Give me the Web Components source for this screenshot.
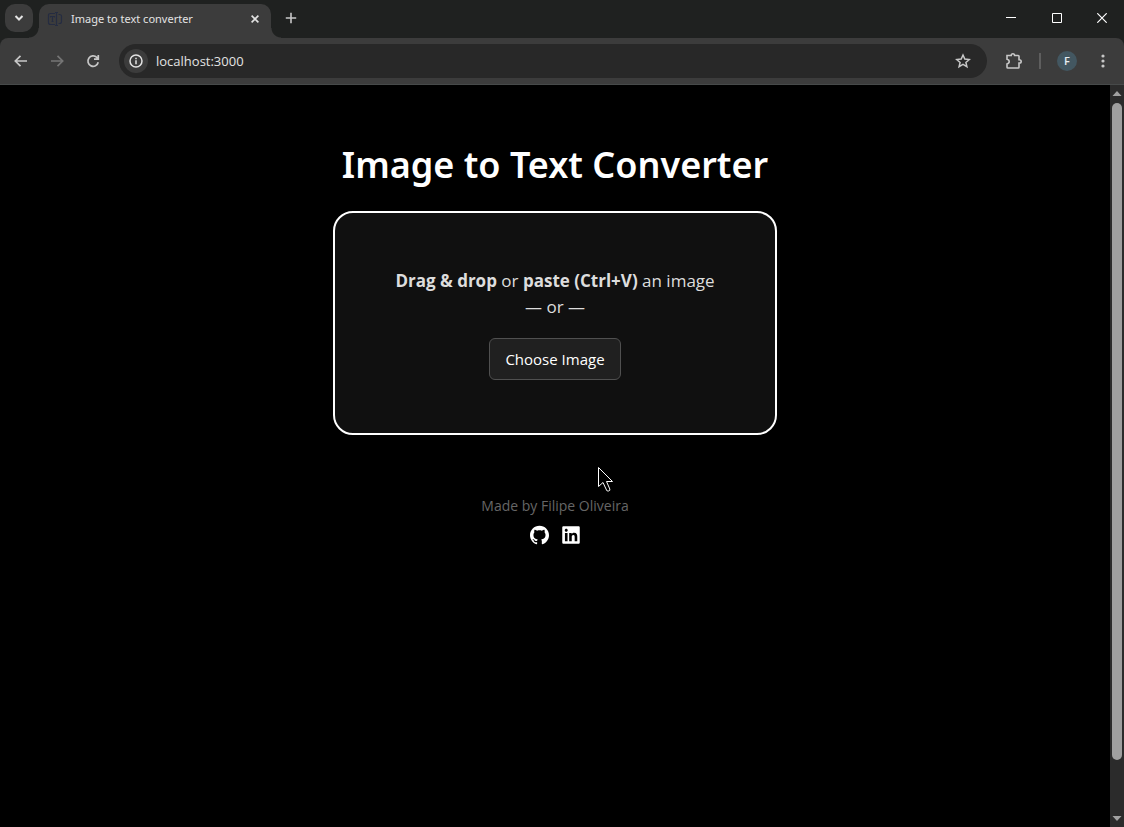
<!DOCTYPE html>
<html lang="en">
<head>
<meta charset="utf-8">
<title>Image to text converter</title>
<style>
html,body{margin:0;height:100%;background:#000}
body{font-family:"Open Sans","Noto Sans",sans-serif;overflow:hidden}
</style>
</head>
<body>
<browser-window>
  <tab-strip slot="tabs"><browser-tab>Image to text converter</browser-tab></tab-strip>
  <browser-toolbar slot="toolbar" url="localhost:3000" initial="F"></browser-toolbar>
  <converter-page>
    <drop-zone></drop-zone>
    <page-credits slot="footer">Made by Filipe Oliveira</page-credits>
  </converter-page>
  <scroll-bar slot="scroll"></scroll-bar>
</browser-window>
<script>
const define = (name, html, setup) => {
  const template = document.createElement('template');
  template.innerHTML = html;
  customElements.define(name, class extends HTMLElement {
    constructor() {
      super();
      this.attachShadow({mode: 'open'}).append(template.content.cloneNode(true));
    }
    connectedCallback() { if (setup) setup(this, this.shadowRoot); }
  });
};
const buttonReset = `button{border:0;padding:0;margin:0;background:none;color:inherit;font:inherit;display:flex;align-items:center;justify-content:center}svg{display:block}`;

define('browser-window', `
<style>
:host{display:flex;flex-direction:column;height:100vh;position:relative}
.view{flex:1;display:flex;min-height:0;border-top:1px solid #474a4a}
.page{flex:1;min-width:0;background:#000}
.cursor{position:absolute;left:597px;top:466px}
</style>
<slot name="tabs"></slot><slot name="toolbar"></slot>
<div class="view"><div class="page"><slot></slot></div><slot name="scroll"></slot></div>
<svg class="cursor" width="18" height="28" viewBox="0 0 18 28" aria-hidden="true"><path d="M1.500 1.500V20.500L6 16.500L9.500 24Q10 25.500 11.500 25Q13.500 24.500 12.800 23L9.500 15.500H15.500Z" fill="#000" stroke="#fff"/></svg>
`);

define('tab-strip', `
<style>
:host{display:flex;height:38px;background:#1f2120;color:#e3e3e3}
${buttonReset}
.search{width:28px;height:28px;margin:4px 6px 0 5px;border-radius:10px;background:#3c3c3c}
.new{width:28px;height:28px;margin:4px 0 0 6px;color:#c7c7c7}
.controls{margin-left:auto;display:flex;color:#fff}
.controls button{width:46px;height:36px}
.controls button:last-child{width:44px}
</style>
<button class="search" aria-label="Search tabs"><svg width="10" height="8" viewBox="0 0 10 8" fill="none" stroke="currentColor" stroke-width="2"><path d="M1.500 2L5 5.500L8.500 2"/></svg></button>
<slot></slot>
<button class="new" aria-label="New tab"><svg width="12" height="12" viewBox="0 0 12 12" stroke="currentColor" stroke-width="1.600"><path d="M6 .8V11.200M.8 6H11.200"/></svg></button>
<div class="controls">
<button aria-label="Minimize"><svg width="10" height="10" stroke="currentColor"><path d="M0 4.500H10"/></svg></button>
<button aria-label="Maximize"><svg width="10" height="10" fill="none" stroke="currentColor"><path d="M.5 .5H9.500V9.500H.5Z"/></svg></button>
<button aria-label="Close"><svg width="10" height="10" stroke="currentColor" stroke-width="1.200"><path d="M.3 .3L9.700 9.700M9.700 .3L.3 9.700"/></svg></button>
</div>
`);

define('browser-tab', `
<style>
:host{display:flex;align-items:center;box-sizing:border-box;position:relative;width:232px;height:34px;margin-top:4px;padding:0 8px 5px;background:#3c3c3c;border-radius:10px 10px 0 0;font-size:11px}
:host::before,:host::after{content:"";position:absolute;bottom:0;width:10px;height:10px}
:host::before{right:100%;background:radial-gradient(circle at 0 0,transparent 9px,#3c3c3c 10px)}
:host::after{left:100%;background:radial-gradient(circle at 100% 0,transparent 9px,#3c3c3c 10px)}
.title{flex:1;margin-left:8px;white-space:nowrap;font-family:"Noto Sans",sans-serif}
${buttonReset}
button{width:16px;height:16px}
</style>
<svg width="16" height="16" viewBox="0 0 16 16" fill="none" stroke="#252c41" stroke-width="1.200"><path d="M8 2.500H3.500Q1.500 2.500 1.500 4.500V11.500Q1.500 13.500 3.500 13.500H8M9.500 1.500V14.500M8 1.500H11M8 14.500H11M11.500 3.500H12.500Q14.500 3.500 14.500 5.500V10.500Q14.500 12.500 12.500 12.500H11.500M3.500 6.500V5.500H7.500V6.500M5.500 5.500V10.500M4.500 10.500H6.500"/></svg>
<span class="title"><slot></slot></span>
<button aria-label="Close tab"><svg width="8" height="8" stroke="currentColor" stroke-width="1.600"><path d="M.6 .6L7.400 7.400M7.400 .6L.6 7.400"/></svg></button>
`);

define('browser-toolbar', `
<style>
:host{display:block;background:#1f2120;color:#c7c7c7}
.bar{display:flex;align-items:center;height:46px;padding:0 7px;background:#3c3c3c;border-radius:8px 8px 0 0}
${buttonReset}
button{width:28px;height:28px;flex:none}
.nav{display:flex;gap:8px}
.forward{color:#757575}
.omnibox{flex:1;min-width:0;display:flex;align-items:center;height:34px;margin:0 13px 0 12px;padding:0 10px 0 5px;box-sizing:border-box;background:#282828;border-radius:17px}
.info{width:24px;height:24px;border-radius:50%;background:#3c3c3c;color:#e3e3e3}
input{flex:1;min-width:0;margin:0 8px;padding:0;border:0;outline:0;background:none;color:#e3e3e3;font:13px "Open Sans",sans-serif}
.divider{width:2px;height:16px;margin:0 12px 0 11px;background:#5e5e5e}
.avatar span{width:20px;height:20px;border-radius:50%;background:#435761;color:#e8eef2;font-size:11px;font-weight:600;line-height:20px}
.menu{margin-left:8px}
</style>
<div class="bar">
<div class="nav">
<button aria-label="Back"><svg width="14" height="12" viewBox="0 0 14 12" fill="none" stroke="currentColor" stroke-width="1.700"><path d="M13 6H1.500M6.500 .8L1.300 6L6.500 11.200"/></svg></button>
<button class="forward" aria-label="Forward"><svg width="14" height="12" viewBox="0 0 14 12" fill="none" stroke="currentColor" stroke-width="1.700"><path d="M1 6H12.500M7.500 .8L12.700 6L7.500 11.200"/></svg></button>
<button aria-label="Reload"><svg width="14" height="14" viewBox="0 0 14 14" fill="none" stroke="currentColor" stroke-width="1.700"><path d="M12.200 8.200A5.200 5.200 0 1 1 10.800 3.400L12.300 4.900M12.300 1V5.200H8"/></svg></button>
</div>
<div class="omnibox">
<button class="info" aria-label="View site information"><svg width="14" height="14" viewBox="0 0 14 14" fill="none" stroke="currentColor" stroke-width="1.500"><circle cx="7" cy="7" r="6"/><path d="M7 6.200V10.200M7 3.800V5.200"/></svg></button>
<input type="text" aria-label="Address" spellcheck="false">
<button aria-label="Bookmark"><svg width="16" height="16" viewBox="0 0 16 16" fill="none" stroke="currentColor" stroke-width="1.500"><path d="M8 2L9.800 6.100L14.200 6.500L10.900 9.400L11.900 13.700L8 11.400L4.100 13.700L5.100 9.400L1.800 6.500L6.200 6.100Z"/></svg></button>
</div>
<button aria-label="Extensions"><svg width="18" height="18" viewBox="0 0 18 18" fill="none" stroke="currentColor" stroke-width="1.600"><path d="M2 3.500H6.200Q6.200 1.800 7.900 1.800T9.600 3.500H13.200Q14 3.500 14 4.300V7.700Q16.200 7.700 16.200 9.400T14 11.100V15.200Q14 16 13.200 16H2.800Q2 16 2 15.200V12Q4.200 11.500 4.200 9.600T2 7.200Z"/></svg></button>
<div class="divider"></div>
<button class="avatar" aria-label="Profile"><span></span></button>
<button class="menu" aria-label="Menu"><svg width="4" height="16" fill="currentColor"><circle cx="2" cy="3" r="1.600"/><circle cx="2" cy="8" r="1.600"/><circle cx="2" cy="13" r="1.600"/></svg></button>
</div>
`, (el, root) => {
  root.querySelector('input').value = el.getAttribute('url');
  root.querySelector('.avatar span').textContent = el.getAttribute('initial');
});

define('converter-page', `
<style>
:host{display:block}
main{display:flex;flex-direction:column;align-items:center;padding:52px 16px 0}
h1{margin:0 0 18px;color:#fff;font-family:"Noto Sans",sans-serif;font-size:36px;font-weight:600;line-height:56px;text-align:center}
</style>
<main><h1>Image to Text Converter</h1><slot></slot><slot name="footer"></slot></main>
`);

define('drop-zone', `
<style>
:host{display:block;box-sizing:border-box;width:444px;max-width:100%;padding:55px 24px 53px;border:2px solid #fff;border-radius:20px;background:#101010;color:#ddd;text-align:center}
p{margin:0 0 18px;font-size:17px;line-height:26px}
strong{font-weight:700}
button{display:block;height:42px;margin:0 auto;padding:0 15px;border:1px solid #505050;border-radius:6px;background:#202020;color:#fff;font:15px "Open Sans",sans-serif}
</style>
<p><strong>Drag &amp; drop</strong> or <strong>paste (Ctrl+V)</strong> an image<br>— or —</p>
<button type="button">Choose Image</button>
`);

define('page-credits', `
<style>
:host{display:block;margin-top:60px;color:#666;font-size:14px;line-height:22px;text-align:center}
.links{display:flex;justify-content:center;align-items:center;gap:13px;margin-top:8px}
a{color:#fff}svg{display:block}
</style>
<slot></slot>
<div class="links">
<a href="#github" aria-label="GitHub"><svg width="19" height="20" viewBox="0 0 24 24" fill="currentColor"><path d="M12 .297c-6.630 0-12 5.373-12 12 0 5.303 3.438 9.800 8.205 11.385.6.113.82-.258.82-.577 0-.285-.01-1.040-.015-2.040-3.338.724-4.042-1.610-4.042-1.610C4.422 18.070 3.633 17.700 3.633 17.700c-1.087-.744.084-.729.084-.729 1.205.084 1.838 1.236 1.838 1.236 1.070 1.835 2.809 1.305 3.495.998.108-.776.417-1.305.760-1.605-2.665-.3-5.466-1.332-5.466-5.930 0-1.310.465-2.380 1.235-3.220-.135-.303-.540-1.523.105-3.176 0 0 1.005-.322 3.300 1.230.960-.267 1.980-.399 3-.405 1.020.006 2.040.138 3 .405 2.280-1.552 3.285-1.230 3.285-1.230.645 1.653.240 2.873.120 3.176.765.840 1.230 1.910 1.230 3.220 0 4.610-2.805 5.625-5.475 5.920.420.360.810 1.096.810 2.220 0 1.606-.015 2.896-.015 3.286 0 .315.210.690.825.570C20.565 22.092 24 17.592 24 12.297c0-6.627-5.373-12-12-12"/></svg></a>
<a href="#linkedin" aria-label="LinkedIn"><svg width="18" height="20" viewBox="0 0 448 512" fill="currentColor"><path d="M416 32H31.900C14.300 32 0 46.500 0 64.300v383.400C0 465.500 14.300 480 31.900 480H416c17.600 0 32-14.500 32-32.300V64.300c0-17.800-14.400-32.300-32-32.300zM135.400 416H69V202.200h66.500V416zm-33.200-243c-21.300 0-38.500-17.300-38.500-38.500S80.900 96 102.200 96c21.200 0 38.500 17.300 38.500 38.500 0 21.300-17.200 38.500-38.500 38.500zm282.100 243h-66.400V312c0-24.800-.5-56.700-34.500-56.700-34.600 0-39.900 27-39.900 54.900V416h-66.400V202.200h63.700v29.200h.9c8.900-16.800 30.600-34.500 62.900-34.500 67.200 0 79.700 44.300 79.700 101.900V416z"/></svg></a>
</div>
`);

define('scroll-bar', `
<style>
:host{display:flex;flex-direction:column;align-items:center;width:14px;background:#2b2b2b;color:#a0a0a0}
.track{flex:1;width:10px}
.thumb{height:93%;border-radius:5px;background:#9f9f9f}
svg{display:block;flex:none}
</style>
<svg width="14" height="18" fill="currentColor"><path d="M7 6L11.500 11H2.500Z"/></svg>
<div class="track"><div class="thumb"></div></div>
<svg width="14" height="18" fill="currentColor"><path d="M7 12L2.500 7H11.500Z"/></svg>
`);
</script>
</body>
</html>
